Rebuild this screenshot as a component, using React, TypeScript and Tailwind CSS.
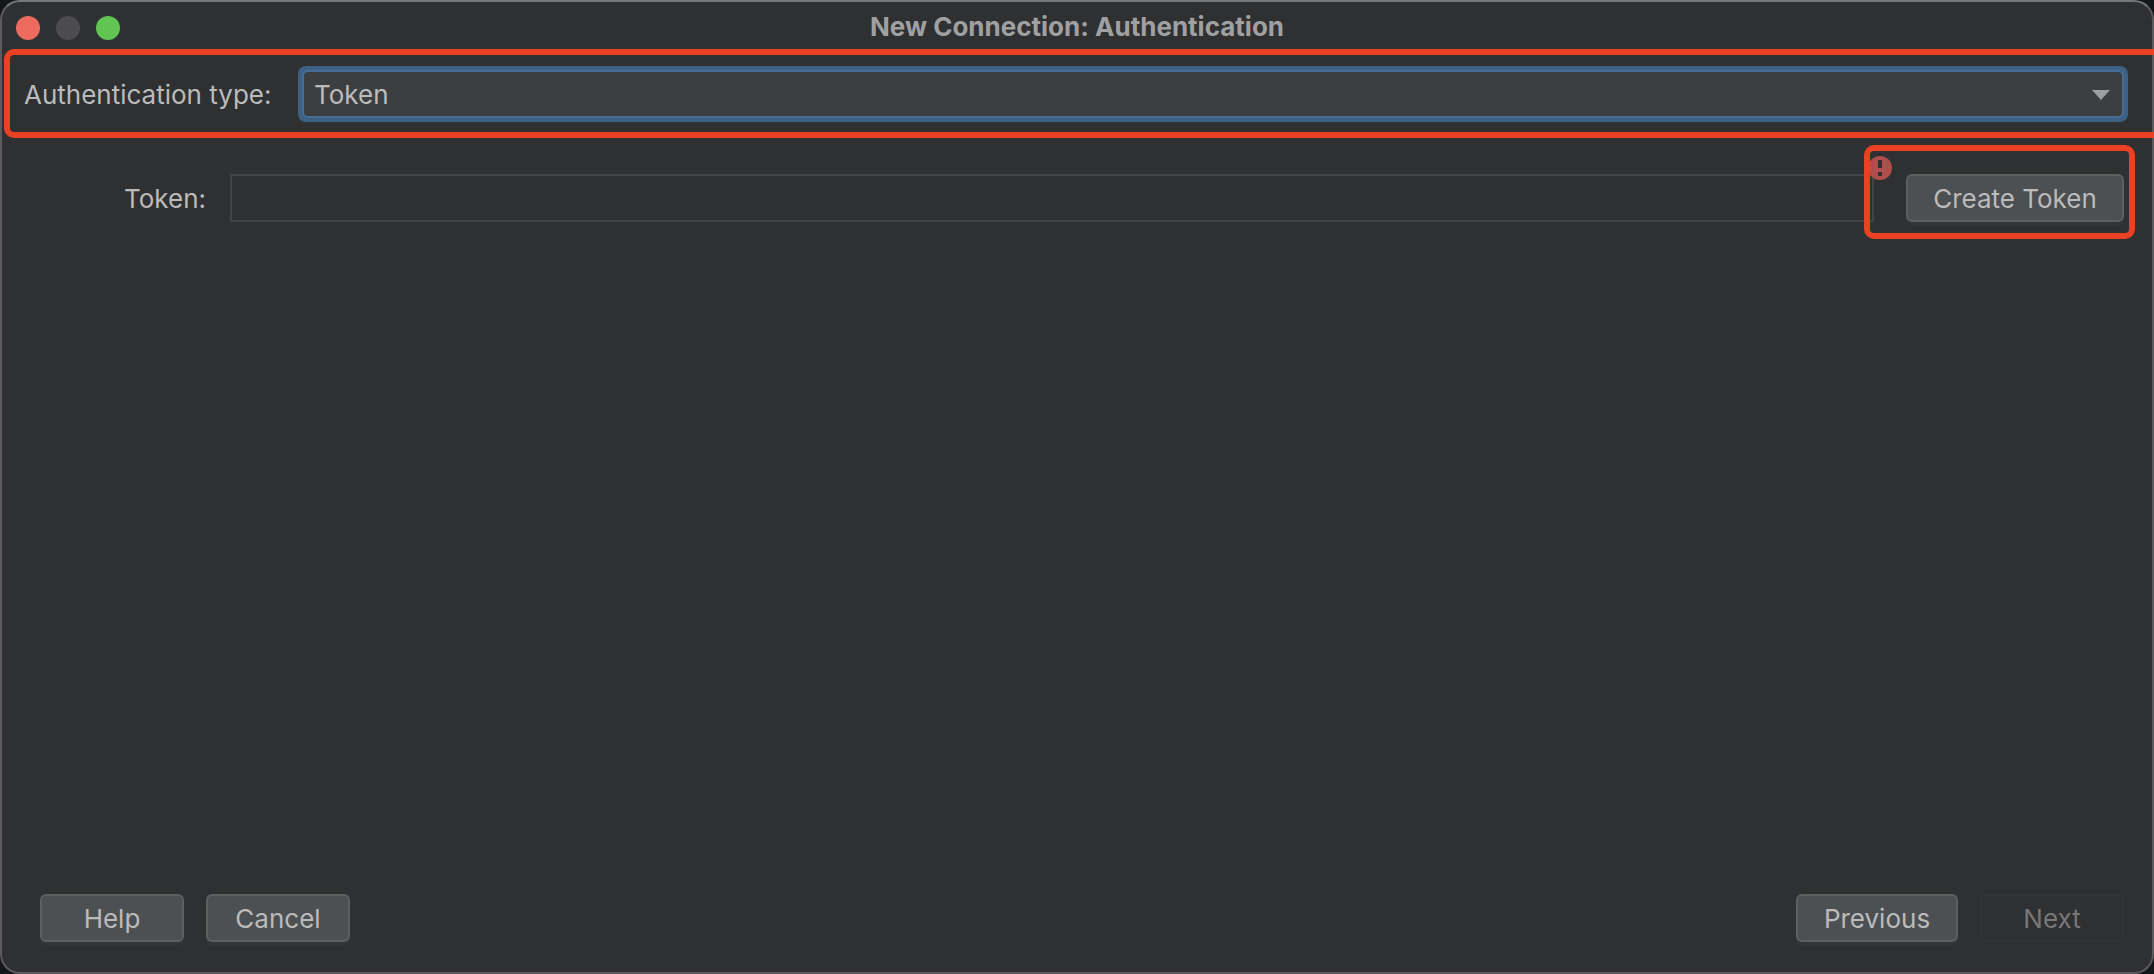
import type { ButtonHTMLAttributes } from "react";

function Button({ className = "", ...props }: ButtonHTMLAttributes<HTMLButtonElement>) {
  return (
    <button
      type="button"
      className={`h-12 rounded-md border-2 border-[#5e6060] bg-[#4c5052] pt-0.5 text-center text-[#bbbbbb] shadow-[0_4px_0_#333436] disabled:border-[#333436] disabled:bg-transparent disabled:text-[#777777] disabled:shadow-none ${className}`}
      {...props}
    />
  );
}

function ErrorBadge() {
  return (
    <svg viewBox="0 0 24 24" className="absolute -top-[18px] -right-[18px] size-6" role="img" aria-label="Error">
      <circle cx="12" cy="12" r="12" fill="#ae4f4e" />
      <path d="M10 4h4v8h-4zM10 16h4v4h-4z" fill="#2f3032" />
    </svg>
  );
}

function TitleBar() {
  return (
    <header className="grid grid-cols-[1fr_auto_1fr] items-center px-3.5 pt-3.5 pb-[9px]">
      <div className="flex gap-4">
        <button type="button" aria-label="Close" className="size-6 rounded-full bg-[#ed6a5e]" />
        <button type="button" aria-label="Minimize" disabled className="size-6 rounded-full bg-[#4c4c4e]" />
        <button type="button" aria-label="Zoom" className="size-6 rounded-full bg-[#61c554]" />
      </div>
      <h1 className="h-6 text-[26px] leading-[22px] font-bold text-[#a0a0a1]">New Connection: Authentication</h1>
    </header>
  );
}

export default function App() {
  return (
    <div className="min-h-screen bg-[#151617] font-['Inter','Liberation_Sans',sans-serif] text-[26px] leading-8 text-[#bbbbbb]">
      <main className="flex min-h-screen flex-col rounded-[20px] border-2 border-[#5b5b5d] border-t-[#767778] bg-[#2f3032]">
        <TitleBar />

        <section className="-mr-0.5 ml-0.5 flex items-center rounded-l-[10px] border-6 border-r-0 border-[#ec4024] pt-[11px] pr-[26px] pb-2.5 pl-3.5">
          <label htmlFor="auth-type" className="w-[274px] shrink-0 pt-0.5">
            Authentication type:
          </label>
          <div className="relative flex-1 rounded-lg bg-[#3d6185] p-1">
            <select
              id="auth-type"
              className="block h-12 w-full appearance-none rounded-md border-2 border-[#466d94] bg-[#3c3f41] px-2.5 pt-0.5 outline-none"
            >
              <option>Token</option>
            </select>
            <svg viewBox="0 0 18 10" className="pointer-events-none absolute top-6 right-[18px] h-2.5 w-[18px]" aria-hidden="true">
              <path d="M0 0h18L9 10z" fill="#9b9fa2" />
            </svg>
          </div>
        </section>

        <section className="mt-9 flex items-center pr-7">
          <label htmlFor="token" className="w-[228px] shrink-0 pt-0.5 pr-6 text-right">
            Token:
          </label>
          <div className="relative flex-1">
            <input id="token" type="text" className="block h-12 w-full border-2 border-[#434446] bg-transparent px-2.5 outline-none" />
            <ErrorBadge />
          </div>
          <div className="relative ml-8">
            <Button className="block w-[218px]">Create Token</Button>
            <div className="pointer-events-none absolute -top-[29px] -right-[11px] -bottom-[17px] -left-[42px] rounded-[10px] border-6 border-[#ec4024]" />
          </div>
        </section>

        <footer className="mt-auto flex gap-[22px] pr-7 pb-[30px] pl-[38px]">
          <Button className="w-36">Help</Button>
          <Button className="w-36">Cancel</Button>
          <Button className="ml-auto w-[162px]">Previous</Button>
          <Button disabled className="w-36">
            Next
          </Button>
        </footer>
      </main>
    </div>
  );
}
